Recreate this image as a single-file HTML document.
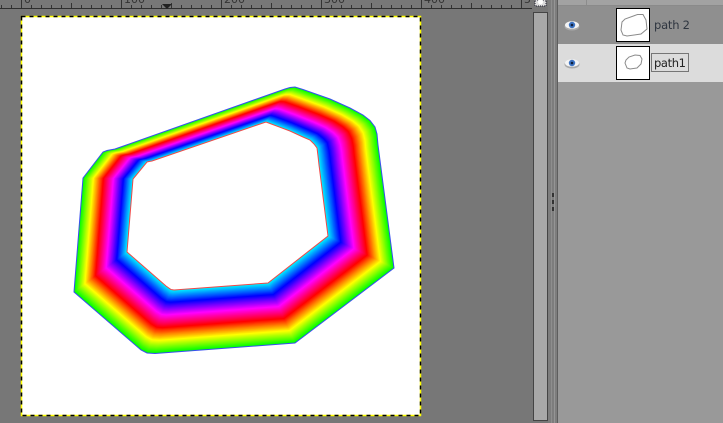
<!DOCTYPE html>
<html><head><meta charset="utf-8"><style>
html,body{margin:0;padding:0;background:#777}
body{width:723px;height:423px;overflow:hidden;position:relative;font-family:"DejaVu Sans","Liberation Sans",sans-serif}
svg{position:absolute;left:0;top:0}
</style></head><body>
<svg id="s" width="723" height="423" viewBox="0 0 723 423" xmlns="http://www.w3.org/2000/svg">
<rect width="723" height="423" fill="#777"/>
<!-- ruler -->
<rect x="0" y="8" width="532" height="1" fill="#2e2e2e"/>
<g stroke="#333" stroke-width="1">
<path d="M1.5 5V8M11.5 5V8M21.5 0V8M31.5 5V8M41.5 5V8M51.5 5V8M61.5 5V8M71.5 3V8M81.5 5V8M91.5 5V8M101.5 5V8M111.5 5V8M121.5 0V8M131.5 5V8M141.5 5V8M151.5 5V8M161.5 5V8M171.5 3V8M181.5 5V8M191.5 5V8M201.5 5V8M211.5 5V8M221.5 0V8M231.5 5V8M241.5 5V8M251.5 5V8M261.5 5V8M271.5 3V8M281.5 5V8M291.5 5V8M301.5 5V8M311.5 5V8M321.5 0V8M331.5 5V8M341.5 5V8M351.5 5V8M361.5 5V8M371.5 3V8M381.5 5V8M391.5 5V8M401.5 5V8M411.5 5V8M421.5 0V8M431.5 5V8M441.5 5V8M451.5 5V8M461.5 5V8M471.5 3V8M481.5 5V8M491.5 5V8M501.5 5V8M511.5 5V8M521.5 0V8"/>
</g>
<g font-size="11" fill="#333" font-family="'DejaVu Sans',sans-serif">
<text x="24" y="3">0</text><text x="124" y="3">100</text><text x="224" y="3">200</text><text x="324" y="3">300</text><text x="424" y="3">400</text><text x="524" y="3">5</text>
</g>
<path d="M162 4H172L167 9Z" fill="#222"/>

<!-- canvas -->
<rect x="21" y="16" width="400" height="400" fill="#fff"/>
<g id="rb">
<polygon fill="#00ff00" points="285,89 290,87.5 295,87 303,89.5 330,99 350,108 363,115 370,120.5 375,127 377,134 378,145 394,268 295,343 155,353.5 147,353 141,350 74,292 83,178 103,152 107,150.5 115,149"/>
</g>
<polygon fill="none" stroke="#3a4ef0" stroke-width="1" points="285,89 290,87.5 295,87 303,89.5 330,99 350,108 363,115 370,120.5 375,127 377,134 378,145 394,268 295,343 155,353.5 147,353 141,350 74,292 83,178 103,152 107,150.5 115,149"/>
<polygon fill="#fff" stroke="#f04848" stroke-width="1" points="263,123 266,122 270,123.5 290,131 303,137 310,140 314,144 317,148 318,156 319,165 328,236 268,283 174,290 171,289.5 166,286 127,252 133,179 147,162 149,161.5 152,161"/>
<!-- selection -->
<rect x="21.5" y="16.5" width="399" height="399" fill="none" stroke="#ffff00" stroke-width="1.5"/>
<rect x="21.5" y="16.5" width="399" height="399" fill="none" stroke="#000" stroke-width="1.5" stroke-dasharray="4 4"/>

<!-- scrollbar -->
<rect x="533.5" y="12.5" width="14" height="408" fill="#a8a8a8" stroke="#444"/>
<rect x="535" y="0" width="11" height="6" fill="#ddd"/>
<rect x="535" y="0" width="11" height="6" fill="none" stroke="#223" stroke-dasharray="1 1"/>
<circle cx="540.5" cy="2" r="2.5" fill="#fff"/>

<!-- divider -->
<rect x="548" y="0" width="10" height="423" fill="#7d7d7d"/>
<rect x="551" y="0" width="1" height="423" fill="#8e8e8e"/>
<rect x="554" y="0" width="1" height="423" fill="#959595"/>
<rect x="557" y="0" width="1" height="423" fill="#5e5e5e"/>
<rect x="552" y="193" width="2" height="4" fill="#333"/>
<rect x="552" y="200" width="2" height="4" fill="#333"/>
<rect x="552" y="207" width="2" height="4" fill="#333"/>

<!-- panel -->
<rect x="558" y="0" width="165" height="423" fill="#999"/>
<rect x="558" y="0" width="165" height="5" fill="#a2a2a2"/>
<rect x="558" y="5" width="165" height="1" fill="#8a8a8a"/>
<rect x="586" y="0" width="1" height="5" fill="#8c8c8c"/>
<rect x="558" y="6" width="165" height="38" fill="#8f8f8f"/>
<rect x="558" y="44" width="165" height="38" fill="#dcdcdc"/>

<!-- eyes -->
<g>
<ellipse cx="572" cy="26.5" rx="7.5" ry="4" fill="#aaa"/>
<ellipse cx="572" cy="25" rx="7" ry="3.8" fill="#f4f4f4"/>
<circle cx="572" cy="25" r="3.2" fill="#3d74c4"/>
<circle cx="572" cy="25" r="1.3" fill="#10203c"/>
<ellipse cx="572" cy="64.5" rx="7.5" ry="4" fill="#aaa"/>
<ellipse cx="572" cy="63" rx="7" ry="3.8" fill="#f4f4f4"/>
<circle cx="572" cy="63" r="3.2" fill="#3d74c4"/>
<circle cx="572" cy="63" r="1.3" fill="#10203c"/>
</g>

<!-- thumbs -->
<rect x="616.5" y="8.5" width="33" height="33" fill="#fff" stroke="#000" stroke-width="1"/>
<polygon fill="none" stroke="#8a8a8a" stroke-width="1" points="637.5,14.5 643,14.5 646,20 647,29 641,34 627,36 623,35 621,30 622,22 625,19"/>
<rect x="616.5" y="46.5" width="33" height="33" fill="#fff" stroke="#000" stroke-width="1"/>
<polygon fill="none" stroke="#8a8a8a" stroke-width="1" points="635,55 640,55.5 642,59 641,64 637,68 630,69 627,68 625,63 626,60 629,57"/>

<text x="654" y="29" font-size="11.5" fill="#2f3640" font-family="'DejaVu Sans',sans-serif" textLength="36">path 2</text>
<text x="654" y="67" font-size="11.5" fill="#222" font-family="'DejaVu Sans',sans-serif" textLength="32">path1</text>
<rect x="651.5" y="53.5" width="37" height="18" fill="none" stroke="#111" stroke-width="1" stroke-dasharray="1 1"/>
</svg>
<script>
(function(){
function P(s){return s.split(' ').map(function(a){return a.split(',').map(Number);});}
var O=P("285,89 290,87.5 295,87 303,89.5 330,99 350,108 363,115 370,120.5 375,127 377,134 378,145 394,268 295,343 155,353.5 147,353 141,350 74,292 83,178 103,152 107,150.5 115,149");
var I=P("263,123 266,122 270,123.5 290,131 303,137 310,140 314,144 317,148 318,156 319,165 319,165 328,236 268,283 174,290 171,289.5 166,286 127,252 133,179 147,162 149,161.5 152,161");
var g=document.getElementById('rb'),N=70,NS='http://www.w3.org/2000/svg';
for(var k=0;k<N;k++){
var t=k/N,pts=[];
for(var i=0;i<O.length;i++){pts.push((O[i][0]+(I[i][0]-O[i][0])*t).toFixed(1)+','+(O[i][1]+(I[i][1]-O[i][1])*t).toFixed(1));}
var h=(120-300*t+360)%360;
var p=document.createElementNS(NS,'polygon');
p.setAttribute('points',pts.join(' '));
p.setAttribute('fill','hsl('+h+',100%,50%)');
g.appendChild(p);
}
})();
</script>
</body></html>
